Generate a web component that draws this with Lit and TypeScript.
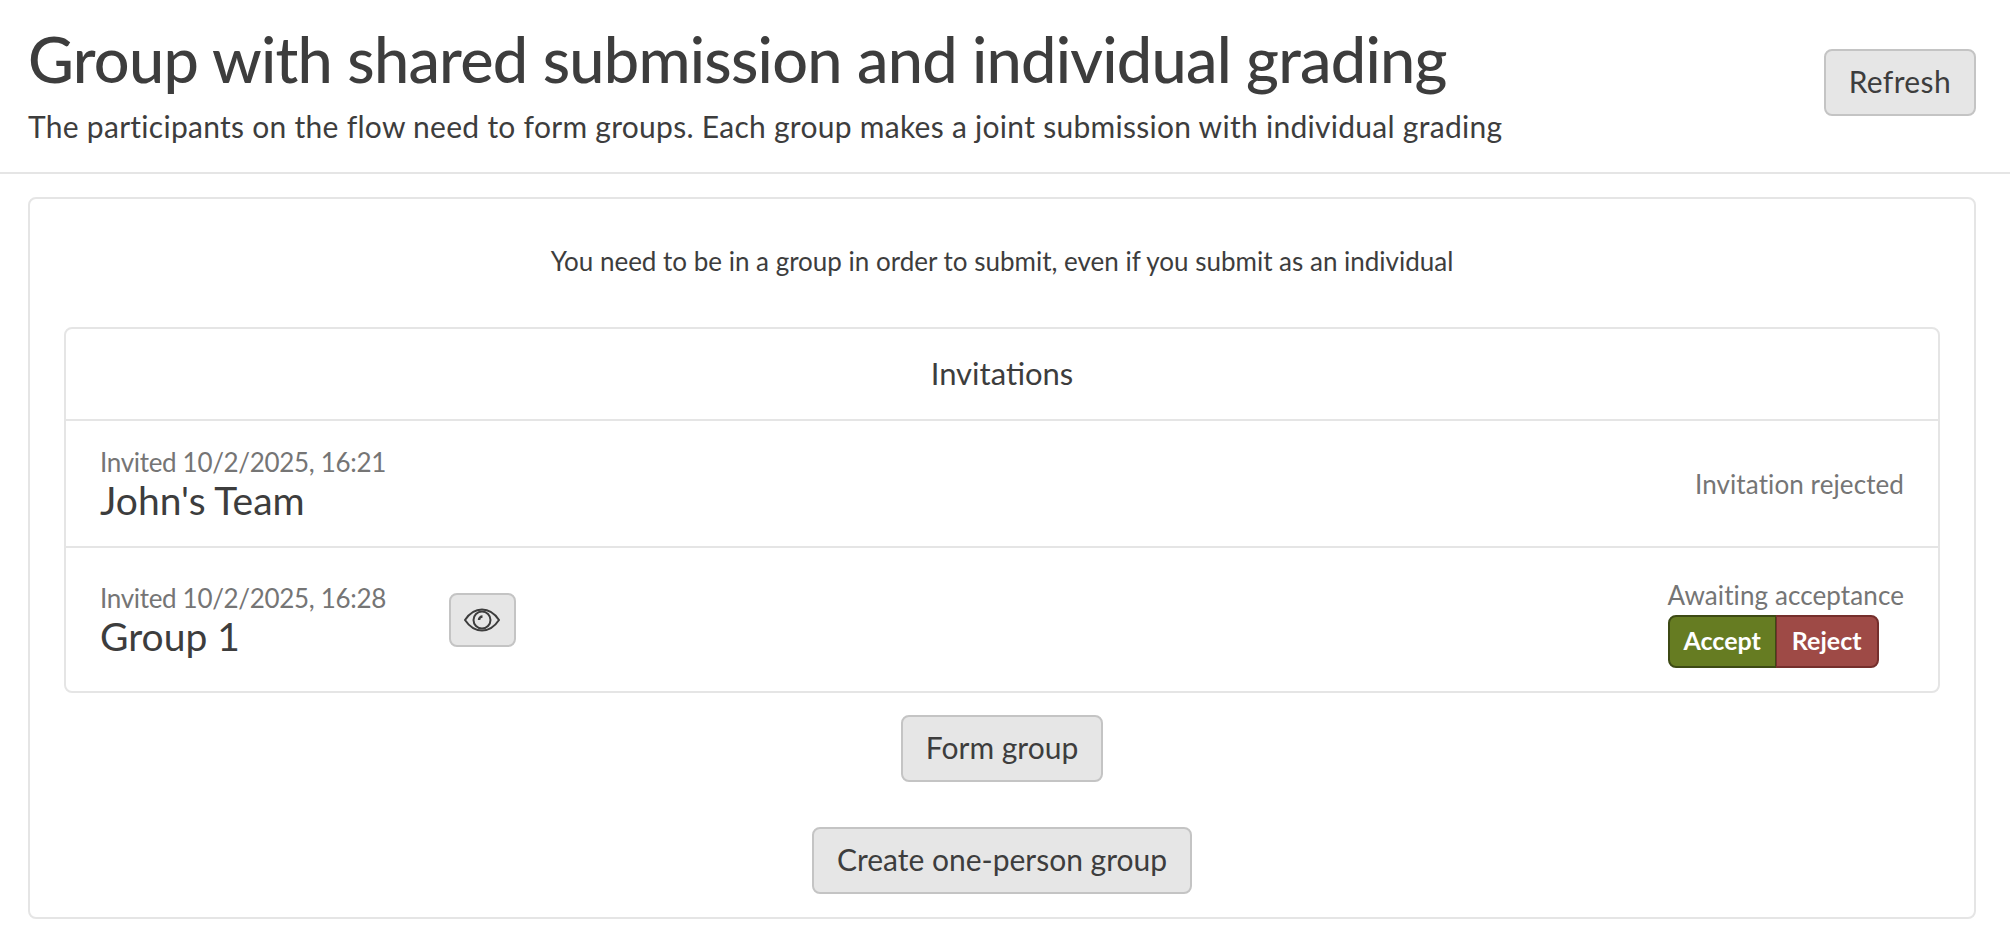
import { LitElement, html, css } from "lit";
import { customElement } from "lit/decorators.js";

@customElement("app-root")
export class AppRoot extends LitElement {
  static styles = css`
    :host { display: block; font-family: "Lato", sans-serif; color: #3d3d3d; background: #fff; min-height: 937px; }
    * { box-sizing: border-box; }
    .header { display: flex; justify-content: space-between; align-items: flex-start; height: 174px; padding: 23px 34px 0 28px; border-bottom: 2px solid #e5e5e5; }
    h1 { margin: 0; font-size: 63px; line-height: 72px; font-weight: 500; letter-spacing: -0.75px; }
    .sub { font-size: 30px; line-height: 36px; margin-top: 13px; letter-spacing: 0.28px; }
    .btn { display: inline-flex; align-items: center; justify-content: center; background: #e6e6e6; border: 2px solid #c4c4c4; border-radius: 8px; height: 67px; padding: 0 23px 3px; font: inherit; font-size: 30px; color: #3d3d3d; }
    .header .btn { margin-top: 26px; letter-spacing: 0.35px; }
    .card { margin: 23px 34px 0 28px; height: 722px; border: 2px solid #e5e5e5; border-radius: 8px; padding: 0 34px; display: flex; flex-direction: column; align-items: stretch; }
    .note { text-align: center; font-size: 26px; line-height: 32px; margin: 46px 0 50px; }
    .inv { border: 2px solid #e5e5e5; border-radius: 8px; }
    .inv-title { height: 92px; display: flex; align-items: center; justify-content: center; font-size: 31px; border-bottom: 2px solid #e5e5e5; padding-bottom: 2px; }
    .row { display: flex; align-items: center; justify-content: space-between; padding: 0 34px; height: 125px; }
    .row + .row { border-top: 2px solid #e5e5e5; height: 145px; }
    .when { font-size: 26px; line-height: 32px; color: #757575; letter-spacing: -0.32px; }
    .name { font-size: 39px; line-height: 44px; }
    .left { display: flex; align-items: center; gap: 63px; }
    .eye { width: 67px; height: 54px; padding: 0; }
    .status { font-size: 26px; line-height: 32px; color: #757575; letter-spacing: 0.1px; }
    .right { display: flex; flex-direction: column; align-items: flex-start; gap: 4px; margin-top: 7px; }
    .group { display: flex; height: 53px; font-size: 25px; color: #fff; font-weight: 700; }
    .acc, .rej { display: flex; align-items: center; padding: 0 14px 2px; border: 2px solid; }
    .acc { background: #667c22; border-color: #3d4a14; border-radius: 8px 0 0 8px; border-right-width: 1px; }
    .rej { background: #9e4a46; border-color: #752f2c; border-radius: 0 8px 8px 0; border-left-width: 1px; padding: 0 15px 2px; }
    .actions { display: flex; flex-direction: column; align-items: center; gap: 45px; margin-top: 22px; }
  `;

  render() {
    return html`
      <div class="header">
        <div>
          <h1>Group with shared submission and individual grading</h1>
          <div class="sub">The participants on the flow need to form groups. Each group makes a joint submission with individual grading</div>
        </div>
        <button class="btn">Refresh</button>
      </div>
      <div class="card">
        <div class="note">You need to be in a group in order to submit, even if you submit as an individual</div>
        <div class="inv">
          <div class="inv-title">Invitations</div>
          <div class="row">
            <div class="left"><div><div class="when">Invited 10/2/2025, 16:21</div><div class="name">John's Team</div></div></div>
            <div class="status">Invitation rejected</div>
          </div>
          <div class="row">
            <div class="left">
              <div><div class="when">Invited 10/2/2025, 16:28</div><div class="name">Group 1</div></div>
              <button class="btn eye" aria-label="View">
                <svg width="36" height="24" viewBox="0 0 36 24" fill="none" stroke="#3d3d3d" stroke-width="2">
                  <path d="M1 12C6 4.500 11.500 1.500 18 1.500S30 4.500 35 12C30 19.500 24.500 22.500 18 22.500S6 19.500 1 12Z"/>
                  <circle cx="18" cy="12" r="8.500"/>
                  <path d="M15 12a3.500 3.500 0 0 1 3.500-3.500" stroke-width="2.500"/>
                </svg>
              </button>
            </div>
            <div class="right">
              <div class="status">Awaiting acceptance</div>
              <div class="group"><div class="acc">Accept</div><div class="rej">Reject</div></div>
            </div>
          </div>
        </div>
        <div class="actions">
          <button class="btn">Form group</button>
          <button class="btn">Create one-person group</button>
        </div>
      </div>
    `;
  }
}
